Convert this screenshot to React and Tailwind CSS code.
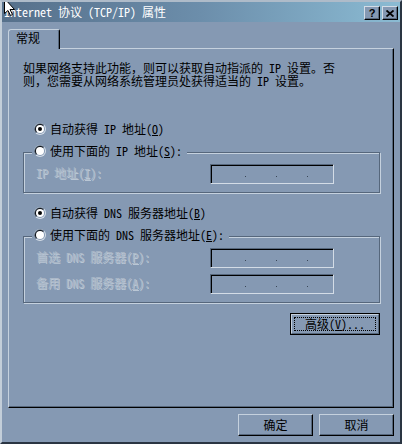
import React from "react";

function Radio({ checked }) {
  return (
    <svg width="12" height="12" viewBox="0 0 12 12" className="shrink-0">
      <circle cx="6" cy="6" r="6" fill="#d3dce6" />
      <path d="M1.76 10.24 A6 6 0 0 1 10.24 1.76 Z" fill="#56677c" />
      <circle cx="6" cy="6" r="5" fill="#8599b3" />
      <path d="M2.46 9.54 A5 5 0 0 1 9.54 2.46 Z" fill="#0c1016" />
      <circle cx="6" cy="6" r="4" fill="#ffffff" />
      {checked && <circle cx="6" cy="6" r="2" fill="#000000" />}
    </svg>
  );
}

function U({ children }) {
  return <span className="underline underline-offset-[1px] decoration-1">{children}</span>;
}

function IPBox() {
  return (
    <div className="w-[124px] h-[20px] shrink-0 border border-t-[#56677c] border-l-[#56677c] border-r-[#d3dce6] border-b-[#d3dce6] shadow-[inset_1px_1px_0_#000] flex items-start pl-[34px] pt-[11px] gap-[30px]">
      <span className="block w-px h-px bg-[#3a4757]" />
      <span className="block w-px h-px bg-[#3a4757]" />
      <span className="block w-px h-px bg-[#3a4757]" />
    </div>
  );
}

function GrayLabel({ children }) {
  return (
    <div className="mt-[2px] h-[14px] leading-[14px] whitespace-nowrap text-[#abb8c8] [text-shadow:1px_1px_0_#bac7d5]">
      {children}
    </div>
  );
}

function RadioRow({ checked, children }) {
  return (
    <div className="flex items-center gap-[4px] h-[14px] leading-[14px] whitespace-nowrap">
      <Radio checked={checked} />
      <span>{children}</span>
    </div>
  );
}

export default function App() {
  return (
    <div className="w-[402px] h-[444px] overflow-hidden relative bg-[#8599b3] border-2 border-t-[#aebbc9] border-l-[#c3ced9] border-r-[#2a3542] border-b-[#2a3542] flex flex-col text-[12px] text-black [font-family:'Noto_Sans_Mono_CJK_SC','Noto_Sans_CJK_SC',monospace]">
      {/* Title bar */}
      <div className="h-[20px] shrink-0 flex justify-between pl-[2px] pr-[2px] bg-linear-to-r from-[#56708b] via-[#6c8eab] to-[#8bbbd3]">
        <div className="flex items-center text-white whitespace-nowrap leading-[14px]">
          Internet 协议 (TCP/IP) 属性
        </div>
        <div className="flex items-start gap-[2px] pt-[4px]">
          <div className="w-[16px] h-[14px] bg-[#8599b3] border border-t-[#d3dce6] border-l-[#d3dce6] border-r-black border-b-black shadow-[inset_-1px_-1px_0_#56677c] flex items-center justify-center text-[11px] font-bold leading-none [font-family:'Liberation_Sans',sans-serif]">
            ?
          </div>
          <div className="w-[16px] h-[14px] bg-[#8599b3] border border-t-[#d3dce6] border-l-[#d3dce6] border-r-black border-b-black shadow-[inset_-1px_-1px_0_#56677c] flex items-center justify-center">
            <svg width="8" height="7" viewBox="0 0 8 7">
              <path d="M0.5 0.5 L7.5 6.5 M7.5 0.5 L0.5 6.5" stroke="#000" strokeWidth="1.8" fill="none" />
            </svg>
          </div>
        </div>
      </div>

      {/* Tab */}
      <div className="mt-[7px] pl-[6px] flex">
        <div className="relative z-10 w-[52px] h-[20px] bg-[#8599b3] border-l border-t border-r border-l-[#c5d1de] border-t-[#c5d1de] border-r-black rounded-tl-[3px] rounded-tr-[2px] shadow-[inset_-1px_0_0_#56677c] pl-[7px] pt-[1px] leading-[14px]">
          常规
        </div>
      </div>

      {/* Panel */}
      <div className="-mt-px mx-[6px] h-[360px] shrink-0 border-l border-t border-r border-b border-l-[#c5d1de] border-t-[#c5d1de] border-r-black border-b-black shadow-[inset_-1px_-1px_0_#56677c] flex flex-col pl-[14px] pr-[13px] pt-[12px]">
        <div className="h-[13px] leading-[13px] whitespace-nowrap">
          如果网络支持此功能，则可以获取自动指派的 IP 设置。否
        </div>
        <div className="h-[13px] leading-[13px] whitespace-nowrap">
          则，您需要从网络系统管理员处获得适当的 IP 设置。
        </div>

        <div className="mt-[35px] ml-[11px]">
          <RadioRow checked>
            自动获得 IP 地址(<U>O</U>)
          </RadioRow>
        </div>

        {/* Group 1 */}
        <div className="mt-[16px] border border-[#56677c] shadow-[1px_1px_0_#c5d1de,inset_1px_1px_0_#c5d1de] flex flex-col pb-[8px]">
          <div className="relative -mt-[9px] ml-[8px] self-start bg-[#8599b3] pl-[2px] pr-[5px]">
            <RadioRow>
              使用下面的 IP 地址(<U>S</U>):
            </RadioRow>
          </div>
          <div className="mt-[6px] flex justify-between pl-[12px] pr-[45px]">
            <GrayLabel>
              IP 地址(<U>I</U>):
            </GrayLabel>
            <IPBox />
          </div>
        </div>

        <div className="mt-[13px] ml-[11px]">
          <RadioRow checked>
            自动获得 DNS 服务器地址(<U>B</U>)
          </RadioRow>
        </div>

        {/* Group 2 */}
        <div className="mt-[16px] border border-[#56677c] shadow-[1px_1px_0_#c5d1de,inset_1px_1px_0_#c5d1de] flex flex-col pb-[8px]">
          <div className="relative -mt-[9px] ml-[8px] self-start bg-[#8599b3] pl-[2px] pr-[5px]">
            <RadioRow>
              使用下面的 DNS 服务器地址(<U>E</U>):
            </RadioRow>
          </div>
          <div className="mt-[6px] flex justify-between pl-[12px] pr-[45px]">
            <GrayLabel>
              首选 DNS 服务器(<U>P</U>):
            </GrayLabel>
            <IPBox />
          </div>
          <div className="mt-[6px] flex justify-between pl-[12px] pr-[45px]">
            <GrayLabel>
              备用 DNS 服务器(<U>A</U>):
            </GrayLabel>
            <IPBox />
          </div>
        </div>

        {/* Advanced button */}
        <div className="mt-[10px] self-end w-[90px] h-[22px] border border-black flex">
          <div className="flex-1 flex border border-t-[#c5d1de] border-l-[#c5d1de] border-r-[#56677c] border-b-[#56677c]">
            <div className="flex-1 m-[2px] border border-dotted border-black flex items-center justify-center leading-[14px] whitespace-nowrap">
              高级(<U>V</U>)...
            </div>
          </div>
        </div>
      </div>

      {/* Bottom buttons */}
      <div className="mt-[6px] flex justify-end gap-[6px] pr-[6px]">
        <div className="w-[75px] h-[22px] border border-t-[#c5d1de] border-l-[#c5d1de] border-r-black border-b-black shadow-[inset_-1px_-1px_0_#56677c] flex items-center justify-center leading-[14px]">
          确定
        </div>
        <div className="w-[75px] h-[22px] border border-t-[#c5d1de] border-l-[#c5d1de] border-r-black border-b-black shadow-[inset_-1px_-1px_0_#56677c] flex items-center justify-center leading-[14px]">
          取消
        </div>
      </div>

      {/* Mouse cursor */}
      <svg className="absolute left-0 top-0" width="14" height="14" viewBox="0 0 14 14">
        <path d="M2.5 -3.5 L2.5 11.5 L6 8.5 L8.5 13.5 L10.5 12.5 L8 7.5 L12.5 7.5 Z" fill="#fff" stroke="#000" strokeWidth="1" />
      </svg>
    </div>
  );
}
